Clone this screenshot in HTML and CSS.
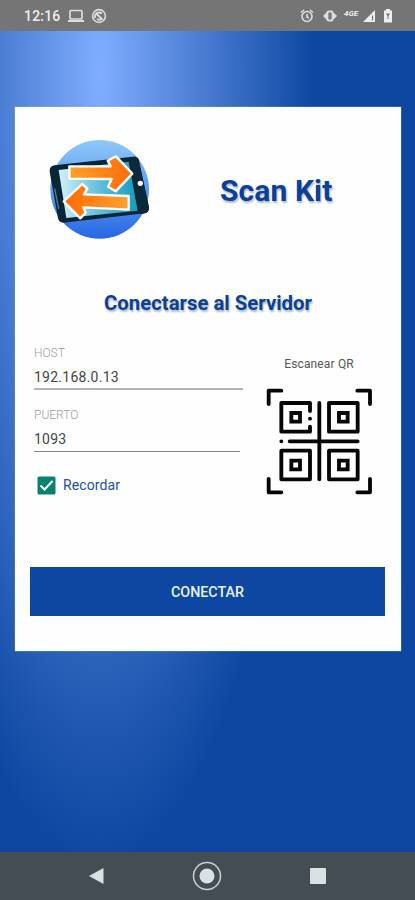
FILE: index.html
```html
<!DOCTYPE html>
<html lang="es">
<head>
<meta charset="utf-8">
<title>Scan Kit</title>
<link rel="stylesheet" href="styles.css">
</head>
<body>
<header class="status">
  <span class="clock">12:16</span>
  <svg class="laptop" width="18" height="16" viewBox="0 0 18 16"><rect x="3" y="2.5" width="12" height="8.5" rx="1" fill="none" stroke="#ddd" stroke-width="1.7"/><path d="M1 13h16" stroke="#ddd" stroke-width="2"/></svg>
  <svg class="sync" width="16" height="16" viewBox="0 0 16 16" fill="none" stroke="#ddd"><circle cx="8" cy="8" r="6.4" stroke-width="1.6"/><path d="M4 10V7q3-4 7-1.500M4.500 5l7 6.500M6 11q3 2 5-1" stroke-width="1.800"/></svg>
  <span class="grow"></span>
  <svg class="alarm" width="16" height="16" viewBox="0 0 16 16" fill="none" stroke="#ddd" stroke-width="1.6"><circle cx="8" cy="8.500" r="5"/><path d="M2 4.500l3-2.500M14 4.500L11 2M8 6v3l2 1"/></svg>
  <svg class="vibrate" width="16" height="16" viewBox="0 0 16 16"><path d="M5 4v8L1 8zM11 4v8l4-4z" fill="#ddd"/><rect x="5.500" y="3.500" width="5" height="9" rx="1" fill="#757575" stroke="#ddd" stroke-width="1.800"/></svg>
  <span class="network">4GE</span>
  <svg class="signal" width="14" height="16" viewBox="0 0 14 16"><path d="M1 14L13 2v12z" fill="#eee"/><path d="M10.500 7.500v5" stroke="#757575" stroke-width="1.200"/></svg>
  <svg class="battery" width="10" height="16" viewBox="0 0 10 16"><path d="M3 1h4v1.500h2V14.500H1V2.500h2z" fill="#eee"/><path d="M3 5.500h4L5.500 8v3h-1V8z" fill="#757575"/></svg>
</header>
<main class="screen">
  <section class="card">
    <div class="brand">
      <svg class="logo" width="104" height="102" viewBox="0 0 312 306">
        <defs>
          <linearGradient id="disc" x1="0" y1="0" x2="0" y2="1"><stop offset="0" stop-color="#90c8f8"/><stop offset=".5" stop-color="#5b9cf0"/><stop offset="1" stop-color="#2667e4"/></linearGradient>
          <linearGradient id="glass" x1="0" y1="0" x2="1" y2="0"><stop offset="0" stop-color="#d3f1f8"/><stop offset=".5" stop-color="#65bfd9"/><stop offset="1" stop-color="#159cbd"/></linearGradient>
          <linearGradient id="right" x1="0" y1="0" x2="1" y2="0"><stop offset="0" stop-color="#ffa12b"/><stop offset="1" stop-color="#ff6b06"/></linearGradient>
          <linearGradient id="left" x1="0" y1="0" x2="1" y2="0"><stop offset="0" stop-color="#ff6b06"/><stop offset="1" stop-color="#ffa12b"/></linearGradient>
        </defs>
        <circle cx="155" cy="154" r="148" fill="url(#disc)"/>
        <path d="M19 82L254 56q15-2 19 11l30 139q2 18-14 20L47 254q-13 1-17-13L5 101q-1-16 14-19z" fill="#082638"/>
        <path d="M32 96L242 71l27 147L55 240z" fill="url(#glass)"/>
        <path d="M245 60l15-2q9 0 12 10l30 140q1 17-16 19l-12 1z" fill="#0c293a"/>
        <path d="M20 151l12 62" stroke="#62798a" stroke-width="4"/>
        <circle cx="277" cy="136" r="8" fill="#fff"/>
        <path d="M64 85H188L179 68 204 55 253 107 203 160 180 146 191 123 64 122z" fill="url(#right)" stroke="#fff" stroke-width="7" stroke-linejoin="round"/>
        <path d="M47 190L103 138 118 152 108 169 242 174V215L106 208 113 224 97 241z" fill="url(#left)" stroke="#fff" stroke-width="7" stroke-linejoin="round"/>
      </svg>
      <h1>Scan Kit</h1>
    </div>
    <h2>Conectarse al Servidor</h2>
    <div class="form">
      <div class="fields">
        <label class="caption">HOST</label>
        <div class="value">192.168.0.13</div>
        <label class="caption">PUERTO</label>
        <div class="value port">1093</div>
        <div class="remember">
          <svg width="19" height="19" viewBox="0 0 19 19"><rect x=".5" y=".5" width="18" height="18" rx="1.500" fill="#078170"/><path d="M3.500 9.500l4 4L15.500 5" fill="none" stroke="#fff" stroke-width="2"/></svg>
          <span>Recordar</span>
        </div>
      </div>
      <div class="scan">
        <span>Escanear QR</span>
        <svg width="107" height="108" viewBox="33 115 321 324" fill="none" stroke="#050505" stroke-width="11.500" stroke-linecap="round" stroke-linejoin="round">
          <path d="M41 163V123H79M307 123H345V163M41 388V428H79M307 428H345V388"/>
          <path d="M165 184V160H79V246H165V231"/>
          <path d="M222 160H308V246H222zM79 303H165V389H79zM222 303H308V389H222z"/>
          <path d="M109 190H135V216H109zM252 190H278V216H252zM109 333H135V359H109zM252 333H278V359H252z" stroke-linejoin="miter"/>
          <path d="M193 160V389M104 275H308M79 275h.1M165 207h.1"/>
        </svg>
      </div>
    </div>
    <button class="connect">CONECTAR</button>
  </section>
</main>
<nav class="navbar">
  <svg width="16" height="18" viewBox="0 0 16 18"><path d="M1 9L15.500 1v16z" fill="#dbe1e2"/></svg>
  <svg width="30" height="30" viewBox="0 0 30 30"><circle cx="15" cy="15" r="13.500" fill="none" stroke="#ccd2d4" stroke-width="1.500"/><circle cx="15" cy="15" r="7.500" fill="#dbe1e2"/></svg>
  <svg width="16" height="16" viewBox="0 0 16 16"><rect width="16" height="16" rx="1" fill="#dbe1e2"/></svg>
</nav>
</body>
</html>
```
FILE: styles.css
```css
* { box-sizing: border-box; }
body { margin: 0; width: 415px; height: 900px; display: flex; flex-direction: column; overflow: hidden; font-family: Roboto, sans-serif; }
svg { display: block; flex: none; }
.status { height: 31px; background: #757575; display: flex; align-items: center; padding: 1px 22px 0 24px; color: #eee; }
.clock { font-size: 14px; font-weight: 500; letter-spacing: .2px; width: 43px; }
.sync { margin-left: 6px; }
.grow { flex: 1; }
.vibrate { margin-left: 7px; }
.network { font-size: 8px; font-weight: 700; font-style: italic; width: 16px; margin: -6px 0 0 6px; }
.signal { margin-left: 2px; }
.battery { margin-left: 7px; }
.screen { flex: 1; padding: 76px 14px 0 15px; background: radial-gradient(ellipse 215px 790px at 100px 42px, #80adff, #0d47a1); }
.card { height: 544px; background: #fefefe; display: flex; flex-direction: column; box-shadow: 0 0 1px #b9d4ff; }
.brand { display: flex; align-items: center; height: 102px; margin: 31px 0 0 33px; }
h1, h2 { margin: 0; font-weight: 700; color: #0d3f96; text-shadow: 1px 2px 2px #a5b9c9; }
h1 { font-size: 30px; line-height: 36px; margin: 4px 0 0 68px; letter-spacing: .1px; }
h2 { font-size: 20.35px; line-height: 28px; text-align: center; margin-top: 49px; }
.form { display: flex; height: 170px; margin-top: 18px; }
.fields { width: 230px; padding-left: 19px; }
.caption { display: block; font-size: 12px; line-height: 16px; padding-top: 10px; height: 30px; color: #a0a0a0; font-weight: 300; }
.value { width: 209px; height: 25px; border-bottom: 2px solid #b4b4b4; font-size: 14px; line-height: 24px; letter-spacing: .25px; color: #444; margin-bottom: 7px; }
.port { width: 206px; border-bottom: 1px solid #888; }
.remember { display: flex; align-items: center; gap: 7px; margin: 24px 0 0 3px; font-size: 14px; letter-spacing: .1px; line-height: 19px; color: #2450a0; }
.scan { width: 148px; display: flex; flex-direction: column; align-items: center; padding-top: 21px; }
.scan span { font-size: 12px; line-height: 16px; letter-spacing: .15px; color: #555; margin-bottom: 16px; }
.connect { height: 49px; width: 355px; margin: 62px 0 0 15px; padding: 0; border: 0; background: #0d47a1; color: #e8f2ff; font: 500 14.3px Roboto, sans-serif; }
.navbar { height: 48px; background: #444d53; display: flex; align-items: center; justify-content: space-between; padding: 0 89px 0 88px; }
```
